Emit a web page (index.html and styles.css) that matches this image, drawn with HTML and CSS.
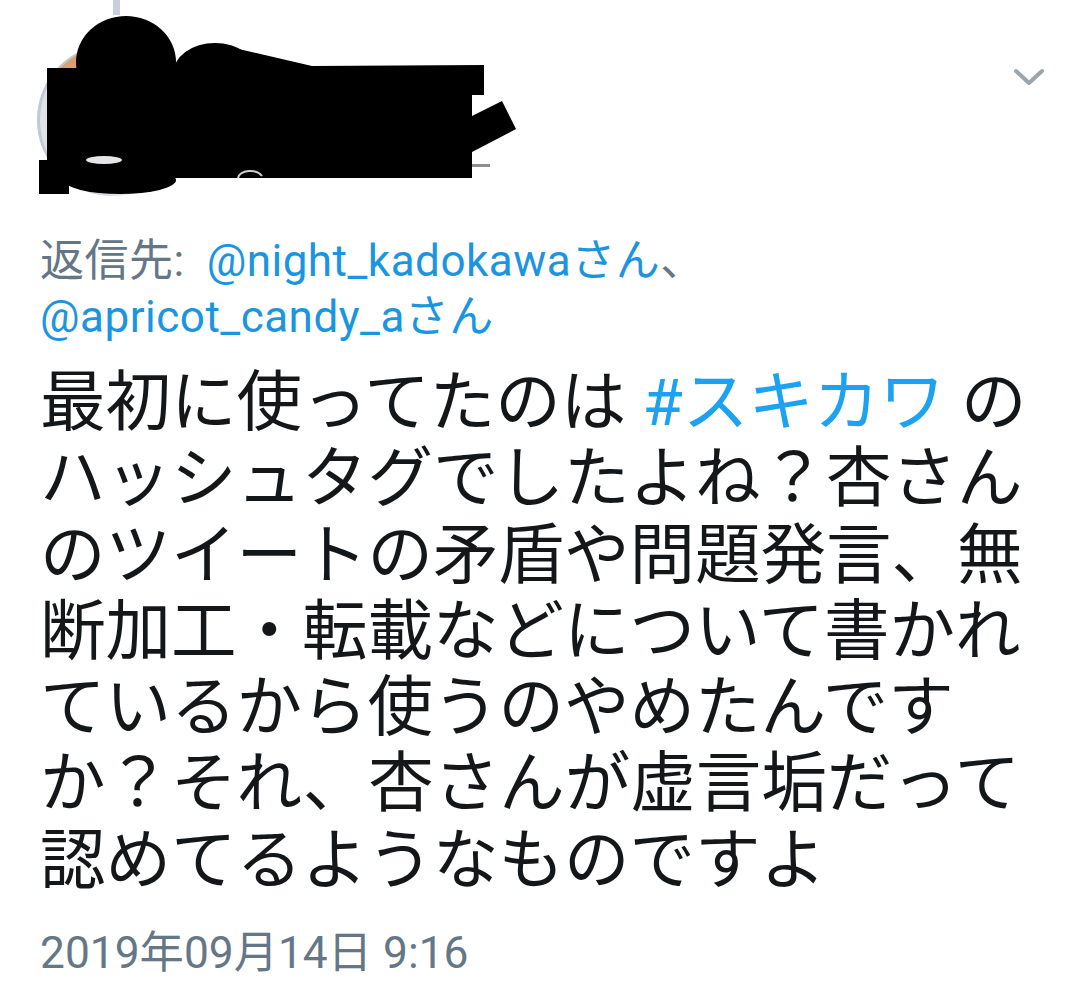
FILE: index.html
```html
<!DOCTYPE html>
<html lang="ja">
<head>
  <meta charset="UTF-8" />
  <meta name="viewport" content="width=device-width, initial-scale=1.0" />
  <title>ツイート</title>
  <link rel="stylesheet" href="styles.css">
</head>
<body>
  <div class="tweet">
    <div class="head">
      <span class="thread"></span>
      <div class="avatar"></div>
      <!-- redaction scribble over avatar and name -->
      <svg class="scribble" width="540" height="210" viewBox="0 0 540 210">
        <g fill="#000">
          <ellipse cx="126" cy="62" rx="50" ry="46"/>
          <ellipse cx="215" cy="74" rx="42" ry="31"/>
          <polygon points="230,47 312,66 484,65 484,95 230,95"/>
          <rect x="47" y="68" width="425" height="110"/>
          <polygon points="426,96 452,103 462,121 502,101 516,129 472,152 440,152"/>
          <rect x="39" y="160" width="30" height="34"/>
          <ellipse cx="120" cy="180" rx="56" ry="14"/>
        </g>
        <ellipse cx="104" cy="160" rx="18" ry="4" fill="#e4e6e8"/>
        <path d="M238 178 C240 170 256 168 262 176" fill="none" stroke="#c9cdd1" stroke-width="2"/>
        <rect x="472" y="164" width="18" height="3" fill="#8a8f94"/>
      </svg>
      <button class="more" aria-label="メニュー">
        <svg width="32" height="18" viewBox="0 0 32 18">
          <polyline points="3,3 16,15 29,3" fill="none" stroke="#9aa5ad" stroke-width="4" stroke-linecap="round" stroke-linejoin="round"/>
        </svg>
      </button>
    </div>

    <div class="reply">
      <span class="label">返信先:</span><a href="#">@night_kadokawaさん</a>、<br>
      <a href="#">@apricot_candy_aさん</a>
    </div>

    <div class="text">
      最初に使ってたのは <a class="tag" href="#">#スキカワ</a> の<br>
      ハッシュタグでしたよね？杏さん<br>
      のツイートの矛盾や問題発言、無<br>
      断加工・転載などについて書かれ<br>
      ているから使うのやめたんです<br>
      か？それ、杏さんが虚言垢だって<br>
      認めてるようなものですよ
    </div>

    <div class="date">2019年09月14日 9:16</div>
  </div>
</body>
</html>
```

FILE: styles.css
```css
body {
  margin: 0;
  background: #ffffff;
  font-family: 'Roboto', 'Noto Sans CJK JP', sans-serif;
  color: #14171a;
}
a {
  color: #1b95e0;
  text-decoration: none;
}
.tweet {
  padding: 0 35px 40px 40px;
}
.head {
  position: relative;
  display: flex;
  justify-content: space-between;
  align-items: flex-start;
  height: 200px;
}
.thread {
  position: absolute;
  left: 73px;
  top: 0;
  width: 7px;
  height: 15px;
  background: #c8d1d9;
}
.avatar {
  margin-top: 44px;
  margin-left: -3px;
  width: 152px;
  height: 152px;
  border-radius: 50%;
  background: linear-gradient(160deg, #d9a070 0 22%, #dfe3e8 22%);
  box-shadow: inset 3px 0 0 #c3cad2;
}
.scribble {
  position: absolute;
  left: -40px;
  top: 0;
}
.more {
  margin-top: 68px;
  padding: 0;
  border: none;
  background: none;
  cursor: pointer;
}
.more svg {
  display: block;
}
.reply {
  margin-top: 33px;
  font-size: 44px;
  line-height: 56px;
  letter-spacing: 0.5px;
  color: #657786;
}
.reply .label {
  margin-right: 22px;
}
.text {
  margin-top: 20px;
  font-size: 65.5px;
  line-height: 76.3px;
  color: #14171a;
}
.text .tag {
  color: #1da1f2;
}
.date {
  margin-top: 24px;
  font-size: 44.3px;
  line-height: 60px;
  color: #657786;
}
```
